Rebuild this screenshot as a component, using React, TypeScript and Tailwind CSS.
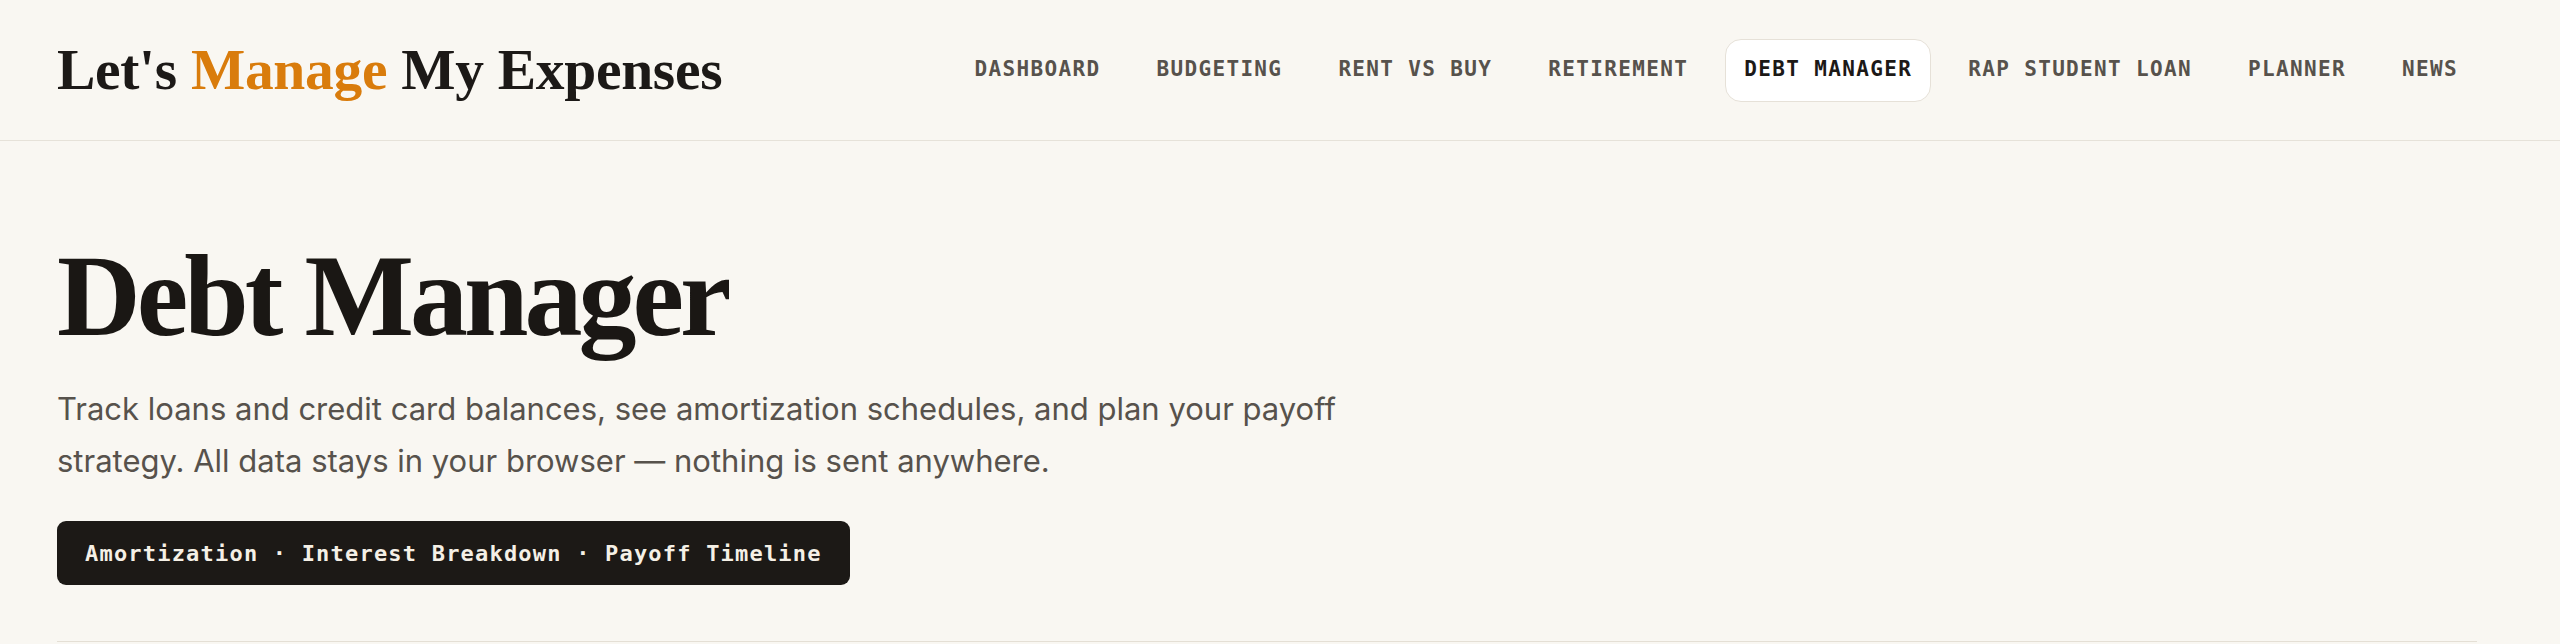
import React from "react";

const navItems = [
  "DASHBOARD",
  "BUDGETING",
  "RENT VS BUY",
  "RETIREMENT",
  "DEBT MANAGER",
  "RAP STUDENT LOAN",
  "PLANNER",
  "NEWS",
];

export default function App() {
  return (
    <div className="min-h-screen bg-[#f9f7f2] text-[#1c1917]">
      <header className="border-b border-[#e6e2d9]">
        <div className="flex h-[140px] items-center justify-between pl-[57px] pr-[83px]">
          <a
            href="#"
            className="text-[57.5px] font-bold leading-none tracking-[-0.3px] text-[#1c1917]"
            style={{ fontFamily: '"Liberation Serif", "DejaVu Serif", serif' }}
          >
            Let's <span className="text-[#d97c0c]">Manage</span> My Expenses
          </a>
          <nav className="flex items-center gap-[18px]">
            {navItems.map((item) => {
              const active = item === "DEBT MANAGER";
              return (
                <a
                  key={item}
                  href="#"
                  className={
                    active
                      ? "flex h-[63px] items-center rounded-[16px] border border-[#e6e1d8] bg-white px-[18px] text-[21px] font-bold tracking-[1.35px] text-[#1c1917]"
                      : "flex h-[63px] items-center rounded-[16px] border border-transparent px-[18px] text-[21px] font-bold tracking-[1.35px] text-[#57524c]"
                  }
                  style={{ fontFamily: '"DejaVu Sans Mono", "Liberation Mono", monospace' }}
                >
                  {item}
                </a>
              );
            })}
          </nav>
        </div>
      </header>

      <main className="pl-[57px] pr-[83px]">
        <section className="pb-[56px] pt-[97px]">
          <h1
            className="text-[116px] font-bold leading-none tracking-[-4px] text-[#1a1714]"
            style={{ fontFamily: '"Liberation Serif", "DejaVu Serif", serif' }}
          >
            Debt Manager
          </h1>
          <p
            className="mt-[29px] max-w-[1380px] text-[31px] leading-[52px] text-[#57524c]"
            style={{ fontFamily: 'Inter, "Noto Sans", sans-serif' }}
          >
            Track loans and credit card balances, see amortization schedules, and plan your payoff
            strategy. All data stays in your browser — nothing is sent anywhere.
          </p>
          <div
            className="mt-[34px] inline-flex h-[64px] items-center rounded-[9px] bg-[#1c1916] px-[28px] text-[22px] font-bold tracking-[1.2px] text-[#f5f0e6]"
            style={{ fontFamily: '"DejaVu Sans Mono", "Liberation Mono", monospace' }}
          >
            Amortization · Interest Breakdown · Payoff Timeline
          </div>
        </section>
        <div className="border-t border-[#e4dfd5]" />
      </main>
    </div>
  );
}
